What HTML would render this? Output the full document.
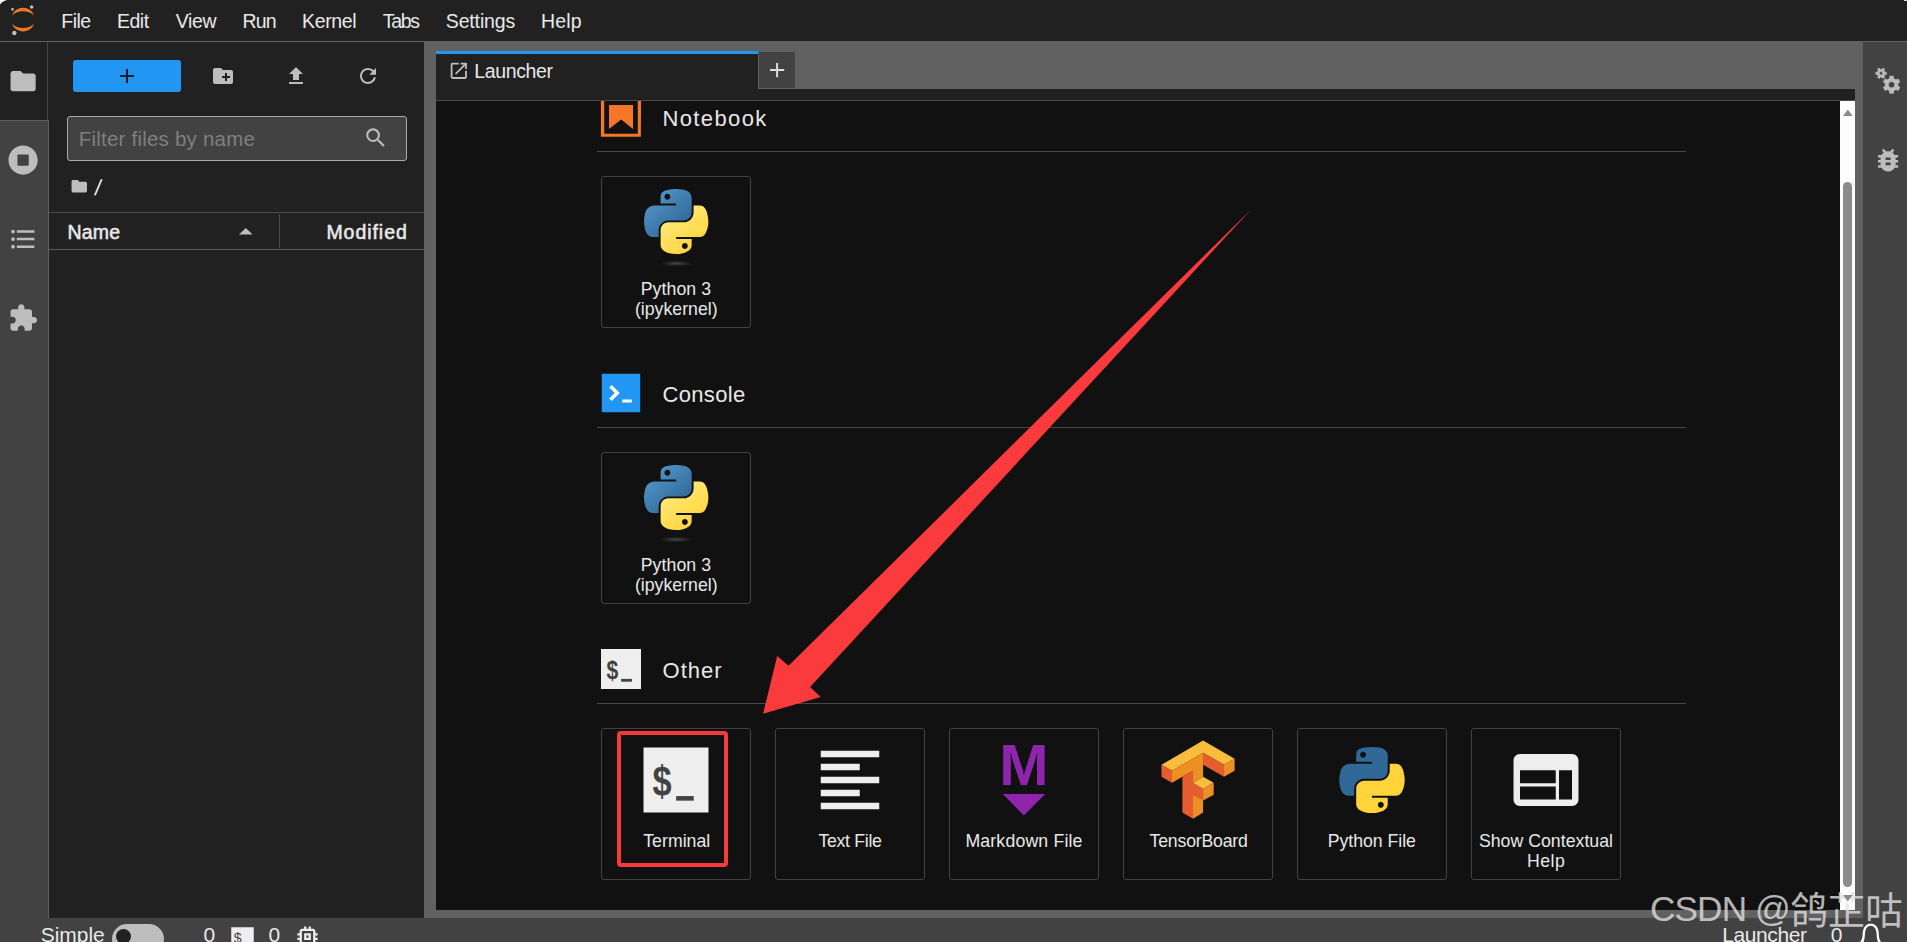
<!DOCTYPE html>
<html lang="en">
<head>
<meta charset="utf-8">
<title>JupyterLab</title>
<style>
*{box-sizing:border-box;margin:0;padding:0}
html,body{width:1907px;height:942px;overflow:hidden;background:#616161}
body{position:relative;font-family:"Liberation Sans","Noto Sans CJK SC",sans-serif;color:#e8e8e8;font-size:19px}
.abs{position:absolute}
.t{position:absolute;white-space:nowrap;line-height:1;transform-origin:0 0}
svg{position:absolute;display:block;overflow:visible}
/* top menu */
#top{left:0;top:0;width:1907px;height:42px;background:#212121;border-bottom:1px solid #616161}
#top .t{top:11px;font-size:19px;color:#fff}
/* left side bar */
#lsb{left:0;top:42px;width:49px;height:876px;background:#424242;border-right:1px solid #606060}
#lsbA{left:0;top:42px;width:49px;height:79px;background:#212121;border-right:1px solid #212121}
#lsbA3{left:47px;top:42px;width:1px;height:78px;background:#444}
#lsbA2{left:0;top:120px;width:49px;height:1px;background:#5c5c5c}
/* file browser */
#fb{left:49px;top:42px;width:375px;height:876px;background:#212121}
#newbtn{left:73px;top:60px;width:108px;height:32px;background:#2196f3;border-radius:3px}
#filter{left:67px;top:116px;width:340px;height:45px;background:#424242;border:1px solid #ababab;border-radius:3px}
#hdr{left:49px;top:212px;width:375px;height:38px;border-top:1px solid #4a4a4a;border-bottom:1px solid #5a5a5a}
#hdrsep{left:279px;top:214px;width:1px;height:34px;background:#4a4a4a}
/* main dock */
#tabbar{left:436px;top:51px;width:1419px;height:50px;background:#212121;border-bottom:1px solid #4c4c4c}
#tabgrey{left:758px;top:51px;width:1097px;height:38px;background:#616161}
#tabblue{left:436px;top:51px;width:322px;height:3px;background:#2196f3}
#plus{left:759px;top:52px;width:36px;height:36px;background:#424242}
#content{left:436px;top:101px;width:1404px;height:809px;background:#111111;overflow:hidden}
#scroll{left:1840px;top:101px;width:15px;height:809px;background:#fdfdfd}
#thumb{left:1843px;top:182px;width:9px;height:705px;background:#8b8b8b;border-radius:5px}
/* right side bar */
#rsb{left:1863px;top:42px;width:44px;height:876px;background:#424242}
/* status */
#status{left:0;top:918px;width:1907px;height:24px;background:#424242}
/* launcher */
.sec{position:absolute;left:597px;width:1089px;height:1px;background:#474747}
.sect{font-size:23px;color:#fff}
.card{position:absolute;width:150px;height:152px;border:1px solid #424242;border-radius:3px;background:#111}
.lbl{position:absolute;white-space:nowrap;font-size:17.5px;line-height:20px;color:#fff;text-align:center;transform-origin:50% 0}
</style>
</head>
<body>
<div id="top" class="abs"></div>
<div id="lsb" class="abs"></div>
<div id="lsbA" class="abs"></div>
<div id="lsbA2" class="abs"></div>
<div id="lsbA3" class="abs"></div>
<div id="fb" class="abs"></div>
<div id="newbtn" class="abs"></div>
<div id="filter" class="abs"></div>
<div id="hdr" class="abs"></div>
<div id="hdrsep" class="abs"></div>
<div id="tabbar" class="abs"></div>
<div id="tabgrey" class="abs"></div>
<div id="tabblue" class="abs"></div>
<div id="plus" class="abs"></div>
<div id="content" class="abs"></div>
<div id="scroll" class="abs"></div>
<div id="thumb" class="abs"></div>
<div id="rsb" class="abs"></div>
<div id="status" class="abs"></div>
<div class="sec" style="top:151px"></div>
<div class="sec" style="top:427px"></div>
<div class="sec" style="top:703px"></div>
<div class="card" style="left:601px;top:176px"></div>
<div class="card" style="left:601px;top:452px"></div>
<div class="card" style="left:601px;top:728px"></div>
<div class="card" style="left:775px;top:728px"></div>
<div class="card" style="left:949px;top:728px"></div>
<div class="card" style="left:1123px;top:728px"></div>
<div class="card" style="left:1297px;top:728px"></div>
<div class="card" style="left:1471px;top:728px"></div>
<!-- section icons -->
<div class="abs" style="left:597px;top:101px;width:48px;height:40px;overflow:hidden">
<svg style="left:0;top:-8px" width="48" height="48" viewBox="0 0 22 22"><g fill="#f37726"><path d="M18.7 3.3v15.4H3.3V3.3h15.4m1.5-1.5H1.8v18.3h18.3l.1-18.3z"/><path d="M16.5 16.5l-5.4-4.3-5.6 4.3v-11h11z"/></g></svg>
</div>
<svg style="left:597px;top:369px" width="48" height="48" viewBox="0 0 200 200"><path fill="#2196f3" d="M20 19.8h160v159.9H20z"/><path fill="#fff" d="M105 127.3h40v12.8h-40zM51.1 77L74 99.9l-23.3 23.3 10.5 10.5 23.3-23.3L95 99.9 84.5 89.4 61.6 66.5z"/></svg>
<svg style="left:597px;top:645px" width="48" height="48" viewBox="0 0 24 24"><rect x="2" y="2" width="20" height="20" fill="#eeeeee"/><text transform="translate(7.700 17) scale(0.8 1)" text-anchor="middle" font-family="Liberation Sans, sans-serif" font-weight="700" font-size="13.200" fill="#424242">$</text><rect x="12.050" y="16.950" width="5.400" height="1.400" fill="#424242"/></svg>

<span class="t" style="left:61.3px;top:12.0px;font-size:19.5px;letter-spacing:-0.52px;">File</span>
<span class="t" style="left:117.0px;top:12.0px;font-size:19.5px;letter-spacing:-0.49px;">Edit</span>
<span class="t" style="left:175.7px;top:12.0px;font-size:19.5px;letter-spacing:-0.37px;">View</span>
<span class="t" style="left:242.4px;top:12.0px;font-size:19.5px;letter-spacing:-0.79px;">Run</span>
<span class="t" style="left:302.1px;top:12.0px;font-size:19.5px;letter-spacing:-0.40px;">Kernel</span>
<span class="t" style="left:382.7px;top:12.0px;font-size:19.5px;letter-spacing:-1.28px;">Tabs</span>
<span class="t" style="left:445.8px;top:12.0px;font-size:19.5px;letter-spacing:-0.15px;">Settings</span>
<span class="t" style="left:541.1px;top:12.0px;font-size:19.5px;letter-spacing:0.12px;">Help</span>
<span class="t" style="left:78.7px;top:129.0px;font-size:20.5px;color:#7f7f7f;letter-spacing:0.22px;">Filter files by name</span>
<span class="t" style="left:67.4px;top:223.0px;font-size:19.5px;letter-spacing:0.23px;-webkit-text-stroke:0.55px #e8e8e8;">Name</span>
<span class="t" style="left:326.4px;top:223.0px;font-size:19.5px;letter-spacing:0.96px;-webkit-text-stroke:0.55px #e8e8e8;">Modified</span>
<span class="t" style="left:474.3px;top:62.0px;font-size:19.5px;letter-spacing:-0.38px;">Launcher</span>
<span class="t" style="left:662.5px;top:108.0px;font-size:22px;letter-spacing:1.37px;">Notebook</span>
<span class="t" style="left:662.4px;top:384.0px;font-size:22px;letter-spacing:0.37px;">Console</span>
<span class="t" style="left:662.6px;top:660.0px;font-size:22px;letter-spacing:0.98px;">Other</span>
<span class="t" style="left:640.7px;top:281.0px;font-size:17.7px;letter-spacing:0.08px;">Python 3</span>
<span class="t" style="left:634.9px;top:301.0px;font-size:17.7px;letter-spacing:0.01px;">(ipykernel)</span>
<span class="t" style="left:640.7px;top:557.0px;font-size:17.7px;letter-spacing:0.08px;">Python 3</span>
<span class="t" style="left:634.9px;top:577.0px;font-size:17.7px;letter-spacing:0.01px;">(ipykernel)</span>
<span class="t" style="left:643.2px;top:833.0px;font-size:17.7px;letter-spacing:0.04px;">Terminal</span>
<span class="t" style="left:818.5px;top:833.0px;font-size:17.7px;letter-spacing:-0.31px;">Text File</span>
<span class="t" style="left:965.4px;top:833.0px;font-size:17.7px;letter-spacing:0.17px;">Markdown File</span>
<span class="t" style="left:1149.6px;top:833.0px;font-size:17.7px;letter-spacing:-0.20px;">TensorBoard</span>
<span class="t" style="left:1327.8px;top:833.0px;font-size:17.7px;letter-spacing:-0.04px;">Python File</span>
<span class="t" style="left:1478.9px;top:833.0px;font-size:17.7px;letter-spacing:0.03px;">Show Contextual</span>
<span class="t" style="left:1527.0px;top:853.0px;font-size:17.7px;letter-spacing:0.49px;">Help</span>
<span class="t" style="left:40.8px;top:924.0px;font-size:21px;letter-spacing:-0.05px;">Simple</span>
<span class="t" style="left:203.5px;top:924.0px;font-size:21px;">0</span>
<span class="t" style="left:268.4px;top:924.0px;font-size:21px;">0</span>
<span class="t" style="left:1722.3px;top:924.0px;font-size:21px;letter-spacing:-0.42px;">Launcher</span>
<span class="t" style="left:1830.7px;top:924.0px;font-size:21px;">0</span>
<span class="t" style="left:1649.9px;top:891.0px;font-size:35.2px;color:rgba(226,226,226,0.8);letter-spacing:-0.85px;">CSDN @</span>
<span class="t" style="left:1790.2px;top:893.0px;font-size:37.5px;color:rgba(226,226,226,0.8);letter-spacing:0.02px;">鸽芷咕</span>
<!-- jupyter logo -->
<svg style="left:11.2px;top:5.2px" width="23.5" height="30.7" viewBox="0 0 39 51"><g transform="translate(-1638 -2281)"><g fill="#F37726"><path transform="translate(1639.74 2311.98)" d="M 18.2646 7.13411C 10.4145 7.13411 3.55872 4.2576 0 0C 1.32539 3.8204 3.79556 7.13081 7.0686 9.47303C 10.3417 11.8152 14.2557 13.0734 18.269 13.0734C 22.2823 13.0734 26.1963 11.8152 29.4694 9.47303C 32.7424 7.13081 35.2126 3.8204 36.538 0C 32.9705 4.2576 26.1148 7.13411 18.2646 7.13411Z"/><path transform="translate(1639.73 2285.48)" d="M 18.2733 5.93931C 26.1235 5.93931 32.9793 8.81583 36.538 13.0734C 35.2126 9.25303 32.7424 5.94262 29.4694 3.6004C 26.1963 1.25818 22.2823 0 18.269 0C 14.2557 0 10.3417 1.25818 7.0686 3.6004C 3.79556 5.94262 1.32539 9.25303 0 13.0734C 3.56745 8.82463 10.4232 5.93931 18.2733 5.93931Z"/></g><g fill="#bdbdbd"><circle cx="1672.25" cy="2284.27" r="2.95"/><circle cx="1643.52" cy="2327.54" r="3.72"/><circle cx="1640.54" cy="2288.26" r="2.18"/></g></g></svg>
<!-- left sidebar -->
<svg style="left:7.9px;top:65.8px" width="30.2" height="30.2" viewBox="0 0 24 24"><path fill="#bdbdbd" d="M10 4H4c-1.1 0-1.99.9-1.99 2L2 18c0 1.1.9 2 2 2h16c1.1 0 2-.9 2-2V8c0-1.1-.9-2-2-2h-8l-2-2z"/></svg>
<svg style="left:7.9px;top:145.1px" width="30.2" height="30.2" viewBox="0 0 512 512"><path fill="#bdbdbd" d="M256 8C119 8 8 119 8 256s111 248 248 248 248-111 248-248S393 8 256 8zm96 328c0 8.800-7.200 16-16 16H176c-8.800 0-16-7.200-16-16V176c0-8.800 7.200-16 16-16h160c8.800 0 16 7.200 16 16v160z"/></svg>
<svg style="left:7.9px;top:224.0px" width="30.2" height="30.2" viewBox="0 0 24 24"><path fill="#bdbdbd" d="M7,5H21V7H7V5M7,13V11H21V13H7M4,4.500A1.500,1.500 0 0,1 5.500,6A1.500,1.500 0 0,1 4,7.500A1.500,1.500 0 0,1 2.500,6A1.500,1.500 0 0,1 4,4.500M4,10.500A1.500,1.500 0 0,1 5.500,12A1.500,1.500 0 0,1 4,13.500A1.500,1.500 0 0,1 2.500,12A1.500,1.500 0 0,1 4,10.500M7,19V17H21V19H7M4,16.500A1.500,1.500 0 0,1 5.500,18A1.500,1.500 0 0,1 4,19.500A1.500,1.500 0 0,1 2.500,18A1.500,1.500 0 0,1 4,16.500Z"/></svg>
<svg style="left:8.4px;top:302.8px" width="30.3" height="30.3" viewBox="0 0 24 24"><path fill="#bdbdbd" d="M20.500 11H19V7c0-1.100-.9-2-2-2h-4V3.500C13 2.120 11.880 1 10.500 1S8 2.120 8 3.500V5H4c-1.100 0-1.990.9-1.990 2v3.800H3.500c1.490 0 2.700 1.210 2.700 2.700s-1.210 2.700-2.700 2.700H2V20c0 1.100.9 2 2 2h3.800v-1.500c0-1.490 1.210-2.700 2.700-2.700 1.490 0 2.700 1.210 2.700 2.700V22H17c1.100 0 2-.9 2-2v-4h1.500c1.380 0 2.500-1.120 2.500-2.500S21.880 11 20.500 11z"/></svg>
<!-- file browser toolbar -->
<svg style="left:114.9px;top:64.1px" width="24" height="24" viewBox="0 0 24 24"><path fill="#1e1e1e" d="M19 13h-6v6h-2v-6H5v-2h6V5h2v6h6v2z"/></svg>
<svg style="left:210.7px;top:63.9px" width="24" height="24" viewBox="0 0 24 24"><path fill="#bdbdbd" d="M20 6h-8l-2-2H4c-1.110 0-1.990.89-1.990 2L2 18c0 1.110.89 2 2 2h16c1.110 0 2-.89 2-2V8c0-1.110-.89-2-2-2zm-1 8h-3v3h-2v-3h-3v-2h3V9h2v3h3v2z"/></svg>
<svg style="left:283.5px;top:64.1px" width="24" height="24" viewBox="0 0 24 24"><path fill="#bdbdbd" d="M9 16h6v-6h4l-7-7-7 7h4zm-4 2h14v2H5z"/></svg>
<svg style="left:355.5px;top:63.9px" width="24" height="24" viewBox="0 0 18 18"><path fill="#bdbdbd" d="M9 13.500c-2.490 0-4.500-2.010-4.500-4.500S6.510 4.500 9 4.500c1.240 0 2.360.52 3.170 1.330L10 8h5V3l-1.760 1.760C12.150 3.680 10.660 3 9 3 5.690 3 3.010 5.690 3.010 9S5.690 15 9 15c2.970 0 5.430-2.160 5.900-5h-1.520c-.46 2-2.240 3.500-4.380 3.500z"/></svg>
<svg style="left:364.1px;top:126.0px" width="23" height="23" viewBox="0 0 18 18"><path fill="#bdbdbd" d="M12.100,10.900h-0.700l-0.200-0.200c0.800-0.900,1.300-2.200,1.300-3.500c0-3-2.400-5.400-5.400-5.400S1.800,4.200,1.800,7.100s2.400,5.400,5.400,5.400 c1.300,0,2.500-0.500,3.500-1.300l0.200,0.200v0.700l4.100,4.100l1.200-1.200L12.100,10.900z M7.100,10.900c-2.100,0-3.700-1.700-3.700-3.700s1.700-3.700,3.700-3.700s3.700,1.700,3.700,3.700 S9.200,10.900,7.100,10.900z"/></svg>
<svg style="left:69.8px;top:177px" width="18.5" height="18.5" viewBox="0 0 24 24"><path fill="#bdbdbd" d="M10 4H4c-1.1 0-1.990.9-1.990 2L2 18c0 1.100.9 2 2 2h16c1.100 0 2-.9 2-2V8c0-1.100-.9-2-2-2h-8l-2-2z"/></svg>
<svg style="left:239.3px;top:228px" width="13.6" height="6.5" viewBox="0 0 13.6 6.5"><path fill="#bdbdbd" d="M0 6.500L6.800 0L13.600 6.500z"/></svg>
<!-- tab icons -->
<svg style="left:447.9px;top:59.5px" width="21.6" height="21.6" viewBox="0 0 24 24"><path fill="#bdbdbd" d="M19 19H5V5h7V3H5a2 2 0 00-2 2v14a2 2 0 002 2h14c1.100 0 2-.9 2-2v-7h-2v7zM14 3v2h3.590l-9.830 9.830 1.410 1.410L19 6.410V10h2V3h-7z"/></svg>
<svg style="left:764.9px;top:57.9px" width="24.2" height="24.2" viewBox="0 0 24 24"><path fill="#dcdcdc" d="M19 13h-6v6h-2v-6H5v-2h6V5h2v6h6v2z"/></svg>
<!-- right sidebar -->
<svg style="left:1872.9px;top:145.2px" width="30.2" height="30.2" viewBox="0 0 24 24"><path fill="#bdbdbd" d="M20 8h-2.810c-.45-.78-1.070-1.450-1.820-1.960L17 4.410 15.590 3l-2.170 2.170C12.960 5.060 12.490 5 12 5c-.49 0-.96.06-1.410.17L8.410 3 7 4.410l1.620 1.630C7.880 6.550 7.260 7.220 6.810 8H4v2h2.090c-.05.33-.09.66-.09 1v1H4v2h2v1c0 .34.04.67.09 1H4v2h2.810c1.040 1.790 2.970 3 5.190 3s4.150-1.210 5.190-3H20v-2h-2.090c.05-.33.09-.66.09-1v-1h2v-2h-2v-1c0-.34-.04-.67-.09-1H20V8zm-6 8h-4v-2h4v2zm0-4h-4v-2h4v2z"/></svg>
<!-- scrollbar arrow -->
<svg style="left:1842.7px;top:109px" width="9.6" height="7" viewBox="0 0 9.6 7"><path fill="#8b8b8b" d="M0 7L4.800 0.500L9.600 7z"/></svg>
<svg style="left:1842.7px;top:895px" width="9.6" height="7" viewBox="0 0 9.6 7"><path fill="#8b8b8b" d="M0 0L4.800 6.500L9.600 0z"/></svg>
<svg width="0" height="0" style="left:0;top:0"><defs>
<linearGradient id="pyb" x1="0" y1="0" x2="0.75" y2="0.85"><stop offset="0" stop-color="#5a9fd4"/><stop offset="1" stop-color="#306998"/></linearGradient>
<linearGradient id="pyy" x1="0.8" y1="0.85" x2="0.35" y2="0.2"><stop offset="0" stop-color="#ffd43b"/><stop offset="1" stop-color="#ffe873"/></linearGradient>
<radialGradient id="pys" cx="0.5" cy="0.5" r="0.5"><stop offset="0" stop-color="#b8b8b8" stop-opacity="0.34"/><stop offset="1" stop-color="#7f7f7f" stop-opacity="0"/></radialGradient>
</defs></svg>
<svg style="left:643.6px;top:188.8px" width="70" height="82" viewBox="0 0 70 82"><ellipse cx="32.3" cy="74.5" rx="17" ry="3" fill="url(#pys)"/><g transform="scale(0.5791)"><path fill="url(#pyb)" d="M 54.918785,9.1927421e-4 C 50.335132,0.02221727 45.957846,0.41313697 42.106285,1.0946693 30.760069,3.0991731 28.700036,7.2947714 28.700035,15.032169 v 10.21875 h 26.8125 v 3.40625 h -26.8125 -10.0625 c -7.792459,0 -14.6157588,4.683717 -16.7499998,13.59375 -2.46181998,10.212966 -2.57101508,16.586023 0,27.25 1.9059283,7.937852 6.4575432,13.593748 14.2499998,13.59375 h 9.21875 v -12.25 c 0,-8.849902 7.657144,-16.656248 16.75,-16.65625 h 26.78125 c 7.454951,0 13.406253,-6.138164 13.40625,-13.625 v -25.53125 c 0,-7.2663386 -6.12998,-12.7247771 -13.40625,-13.9374997 C 64.281548,0.32794397 59.502438,-0.02037903 54.918785,9.1927421e-4 Z m -14.5,8.21875012579 c 2.769547,0 5.03125,2.2986456 5.03125,5.1249996 -2e-6,2.816336 -2.261703,5.09375 -5.03125,5.09375 -2.779476,-1e-6 -5.03125,-2.277415 -5.03125,-5.09375 -10e-7,-2.826353 2.251774,-5.1249996 5.03125,-5.1249996 z"/>
<path fill="url(#pyy)" d="m 85.637535,28.657169 v 11.90625 c 0,9.230755 -7.825895,16.999999 -16.75,17 h -26.78125 c -7.335833,0 -13.406249,6.278483 -13.40625,13.625 v 25.531247 c 0,7.266344 6.318588,11.540324 13.40625,13.625004 8.487331,2.49561 16.626237,2.94663 26.78125,0 6.750155,-1.95439 13.406253,-5.88761 13.40625,-13.625004 V 86.500919 h -26.78125 v -3.40625 h 26.78125 13.406254 c 7.792461,0 10.696251,-5.435408 13.406241,-13.59375 2.79933,-8.398886 2.68022,-16.475776 0,-27.25 -1.92578,-7.757441 -5.60387,-13.59375 -13.406241,-13.59375 z m -15.0625,64.65625 c 2.779478,3e-6 5.03125,2.277417 5.03125,5.093747 -2e-6,2.826354 -2.251775,5.125004 -5.03125,5.125004 -2.76955,0 -5.03125,-2.29865 -5.03125,-5.125004 2e-6,-2.81633 2.261697,-5.093747 5.03125,-5.093747 z"/>
</g></svg>
<svg style="left:643.6px;top:464.8px" width="70" height="82" viewBox="0 0 70 82"><ellipse cx="32.3" cy="74.5" rx="17" ry="3" fill="url(#pys)"/><g transform="scale(0.5791)"><path fill="url(#pyb)" d="M 54.918785,9.1927421e-4 C 50.335132,0.02221727 45.957846,0.41313697 42.106285,1.0946693 30.760069,3.0991731 28.700036,7.2947714 28.700035,15.032169 v 10.21875 h 26.8125 v 3.40625 h -26.8125 -10.0625 c -7.792459,0 -14.6157588,4.683717 -16.7499998,13.59375 -2.46181998,10.212966 -2.57101508,16.586023 0,27.25 1.9059283,7.937852 6.4575432,13.593748 14.2499998,13.59375 h 9.21875 v -12.25 c 0,-8.849902 7.657144,-16.656248 16.75,-16.65625 h 26.78125 c 7.454951,0 13.406253,-6.138164 13.40625,-13.625 v -25.53125 c 0,-7.2663386 -6.12998,-12.7247771 -13.40625,-13.9374997 C 64.281548,0.32794397 59.502438,-0.02037903 54.918785,9.1927421e-4 Z m -14.5,8.21875012579 c 2.769547,0 5.03125,2.2986456 5.03125,5.1249996 -2e-6,2.816336 -2.261703,5.09375 -5.03125,5.09375 -2.779476,-1e-6 -5.03125,-2.277415 -5.03125,-5.09375 -10e-7,-2.826353 2.251774,-5.1249996 5.03125,-5.1249996 z"/>
<path fill="url(#pyy)" d="m 85.637535,28.657169 v 11.90625 c 0,9.230755 -7.825895,16.999999 -16.75,17 h -26.78125 c -7.335833,0 -13.406249,6.278483 -13.40625,13.625 v 25.531247 c 0,7.266344 6.318588,11.540324 13.40625,13.625004 8.487331,2.49561 16.626237,2.94663 26.78125,0 6.750155,-1.95439 13.406253,-5.88761 13.40625,-13.625004 V 86.500919 h -26.78125 v -3.40625 h 26.78125 13.406254 c 7.792461,0 10.696251,-5.435408 13.406241,-13.59375 2.79933,-8.398886 2.68022,-16.475776 0,-27.25 -1.92578,-7.757441 -5.60387,-13.59375 -13.406241,-13.59375 z m -15.0625,64.65625 c 2.779478,3e-6 5.03125,2.277417 5.03125,5.093747 -2e-6,2.826354 -2.251775,5.125004 -5.03125,5.125004 -2.76955,0 -5.03125,-2.29865 -5.03125,-5.125004 2e-6,-2.81633 2.261697,-5.093747 5.03125,-5.093747 z"/>
</g></svg>
<svg style="left:1332.8px;top:740.8px" width="78" height="78" viewBox="-10 -10 131.16 132.39"><path fill="#306998" d="M 54.918785,9.1927421e-4 C 50.335132,0.02221727 45.957846,0.41313697 42.106285,1.0946693 30.760069,3.0991731 28.700036,7.2947714 28.700035,15.032169 v 10.21875 h 26.8125 v 3.40625 h -26.8125 -10.0625 c -7.792459,0 -14.6157588,4.683717 -16.7499998,13.59375 -2.46181998,10.212966 -2.57101508,16.586023 0,27.25 1.9059283,7.937852 6.4575432,13.593748 14.2499998,13.59375 h 9.21875 v -12.25 c 0,-8.849902 7.657144,-16.656248 16.75,-16.65625 h 26.78125 c 7.454951,0 13.406253,-6.138164 13.40625,-13.625 v -25.53125 c 0,-7.2663386 -6.12998,-12.7247771 -13.40625,-13.9374997 C 64.281548,0.32794397 59.502438,-0.02037903 54.918785,9.1927421e-4 Z m -14.5,8.21875012579 c 2.769547,0 5.03125,2.2986456 5.03125,5.1249996 -2e-6,2.816336 -2.261703,5.09375 -5.03125,5.09375 -2.779476,-1e-6 -5.03125,-2.277415 -5.03125,-5.09375 -10e-7,-2.826353 2.251774,-5.1249996 5.03125,-5.1249996 z"/>
<path fill="#ffd43b" d="m 85.637535,28.657169 v 11.90625 c 0,9.230755 -7.825895,16.999999 -16.75,17 h -26.78125 c -7.335833,0 -13.406249,6.278483 -13.40625,13.625 v 25.531247 c 0,7.266344 6.318588,11.540324 13.40625,13.625004 8.487331,2.49561 16.626237,2.94663 26.78125,0 6.750155,-1.95439 13.406253,-5.88761 13.40625,-13.625004 V 86.500919 h -26.78125 v -3.40625 h 26.78125 13.406254 c 7.792461,0 10.696251,-5.435408 13.406241,-13.59375 2.79933,-8.398886 2.68022,-16.475776 0,-27.25 -1.92578,-7.757441 -5.60387,-13.59375 -13.406241,-13.59375 z m -15.0625,64.65625 c 2.779478,3e-6 5.03125,2.277417 5.03125,5.093747 -2e-6,2.826354 -2.251775,5.125004 -5.03125,5.125004 -2.76955,0 -5.03125,-2.29865 -5.03125,-5.125004 2e-6,-2.81633 2.261697,-5.093747 5.03125,-5.093747 z"/>
</svg>
<svg style="left:637px;top:740.6px" width="78" height="78" viewBox="0 0 24 24"><rect x="2" y="2" width="20" height="20" fill="#eeeeee"/><text transform="translate(7.7 17) scale(0.8 1)" text-anchor="middle" font-family="Liberation Sans, sans-serif" font-weight="700" font-size="13.2" fill="#424242">$</text><rect x="12.05" y="16.95" width="5.4" height="1.4" fill="#424242"/></svg>
<svg style="left:811px;top:740.6px" width="78" height="78" viewBox="0 0 24 24"><path fill="#eeeeee" d="M15 15H3v2h12v-2zm0-8H3v2h12V7zM3 13h18v-2H3v2zm0 8h18v-2H3v2zM3 3v2h18V3H3z"/></svg>
<svg style="left:985px;top:740.6px" width="78" height="78" viewBox="0 0 78 78"><text x="14.2" y="44.3" font-family="Liberation Sans, sans-serif" font-weight="700" font-size="56.7" fill="#9025ad" textLength="49.3" lengthAdjust="spacingAndGlyphs">M</text><path fill="#9025ad" d="M17.900 53.100h42.200L38.900 74.400z"/></svg>
<svg style="left:1507px;top:740.6px" width="78" height="78" viewBox="0 0 24 24"><path fill="#eeeeee" d="M20 4H4c-1.100 0-1.990.9-1.990 2L2 18c0 1.100.9 2 2 2h16c1.100 0 2-.9 2-2V6c0-1.100-.9-2-2-2zm-5 14H4v-4h11v4zm0-5H4V9h11v4zm5 5h-4V9h4v9z"/></svg><svg style="left:1150px;top:730px" width="100" height="100" viewBox="0 0 942 942" shape-rendering="geometricPrecision">
<path fill="#f9bd3e" d="M500 100L797 270L697 328L500 215L207 385L108 328z"/>
<path fill="#e55c2e" d="M108 328L207 385L207 497L108 440z"/>
<path fill="#ee8f24" d="M207 385L500 215L500 440L405 497L405 385L305 440L207 497z"/>
<path fill="#e55c2e" d="M500 215L697 328L697 440L500 328z"/>
<path fill="#ee8f24" d="M697 328L797 270L797 383L697 440z"/>
<path fill="#e55c2e" d="M305 440L405 385L405 497L500 555L500 662L405 610L405 835L305 778z"/>
<path fill="#f9bd3e" d="M500 440L600 497L500 555L405 497z"/>
<path fill="#ee8f24" d="M500 555L600 497L600 610L500 665z"/>
<path fill="#ee8f24" d="M405 610L500 660L500 778L405 835z"/>
</svg>
<!-- status bar: toggle -->
<div class="abs" style="left:112px;top:924px;width:52px;height:30px;border-radius:15px;background:#bdbdbd"></div>
<div class="abs" style="left:115.6px;top:928.9px;width:15.5px;height:15.5px;border-radius:50%;background:#212121"></div>
<!-- terminal mini -->
<svg style="left:229.1px;top:924.5px" width="27" height="27" viewBox="0 0 24 24"><rect x="2" y="2" width="20" height="20" fill="#eeeeee"/><text x="4.300" y="16.400" font-family="Liberation Sans, sans-serif" font-size="12.600" fill="#424242">$</text><rect x="12.300" y="15.700" width="5.400" height="1.200" fill="#424242"/></svg>
<!-- kernel chip -->
<svg style="left:293.6px;top:923px" width="27" height="27" viewBox="0 0 24 24"><path fill="#eeeeee" d="M15 9H9v6h6V9zm-2 4h-2v-2h2v2zm8-2V9h-2V7c0-1.100-.9-2-2-2h-2V3h-2v2h-2V3H9v2H7c-1.100 0-2 .9-2 2v2H3v2h2v2H3v2h2v2c0 1.100.9 2 2 2h2v2h2v-2h2v2h2v-2h2c1.100 0 2-.9 2-2v-2h2v-2h-2v-2h2zm-4 6H7V7h10v10z"/></svg>
<!-- bell -->
<svg style="left:1858px;top:923px" width="25.500" height="25.500" viewBox="0 0 16 16"><path fill="#ffffff" d="M8 0.290c-1.400 0-2.700.73-3.600 1.800-1.200 1.500-1.400 3.400-1.500 5.200-.18 2.200-.44 4-2.300 5.300l.28 1.300h5c-.026.66.32 1.100.71 1.500.84.61 2 .61 2.800 0 .52-.4.6-1 .71-1.500h5l.28-1.300c-1.900-.97-2.200-3.300-2.300-5.300-.13-1.800-.26-3.700-1.500-5.200-.85-1-2.200-1.800-3.600-1.800zm0 1.400c.88 0 1.900.55 2.500 1.300.88 1.100 1.100 2.700 1.200 4.400.13 1.700.23 3.600 1.300 5.200h-10c1.100-1.600 1.200-3.400 1.300-5.200.13-1.700.3-3.300 1.200-4.400.59-.72 1.600-1.300 2.500-1.300z"/></svg>
<svg style="left:1863px;top:55px" width="44" height="50" viewBox="0 0 44 50"><path fill="#bdbdbd" fill-rule="evenodd" stroke="#bdbdbd" stroke-width="0.8" stroke-linejoin="round" d="M26.72 23.48L26.79 21.19L30.41 21.19L30.48 23.48L33.05 24.96L35.07 23.88L36.87 27.01L34.93 28.22L34.93 31.18L36.87 32.39L35.07 35.52L33.05 34.44L30.48 35.92L30.41 38.21L26.79 38.21L26.72 35.92L24.15 34.44L22.13 35.52L20.33 32.39L22.27 31.18L22.27 28.22L20.33 27.01L22.13 23.88L24.15 24.96zM25.40 29.70a3.2 3.2 0 1 0 6.4 0a3.2 3.2 0 1 0 -6.4 0z"/><path fill="#bdbdbd" fill-rule="evenodd" stroke="#bdbdbd" stroke-width="0.5" stroke-linejoin="round" d="M19.01 14.41L19.80 13.07L21.78 14.21L21.02 15.56L21.93 17.14L23.48 17.16L23.48 19.44L21.93 19.46L21.02 21.04L21.78 22.39L19.80 23.53L19.01 22.19L17.19 22.19L16.40 23.53L14.42 22.39L15.18 21.04L14.27 19.46L12.72 19.44L12.72 17.16L14.27 17.14L15.18 15.56L14.42 14.21L16.40 13.07L17.19 14.41zM16.40 18.30a1.7 1.7 0 1 0 3.4 0a1.7 1.7 0 1 0 -3.4 0z"/></svg>
<div class="abs" style="left:617px;top:731px;width:111px;height:136px;border:4px solid #f83a3c;border-radius:4px"></div>
<svg style="left:0;top:0" width="1907" height="942" viewBox="0 0 1907 942"><path fill="#fa3a3c" d="M1251.500 209L788.500 665.800L777.200 656L763.100 713.700L820.600 697L810.100 687.100z"/></svg>
<svg style="left:0;top:0" width="8" height="8" viewBox="0 0 8 8"><path fill="#ffffff" d="M0 0H6.800C3 1.200 1 2.800 0 4.800z"/></svg>
<div class="abs" style="left:1904px;top:0;width:3px;height:1px;background:#ddd"></div>
<span class="t" style="left:94.0px;top:176.6px;font-size:21.6px;color:#f0f0f0;transform-origin:50% 80%;transform:skewX(-9deg)">/</span>

</body>
</html>
